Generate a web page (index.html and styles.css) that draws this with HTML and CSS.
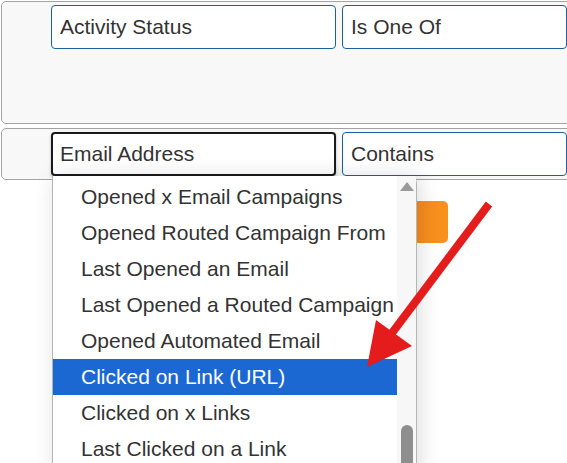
FILE: index.html
```html
<!DOCTYPE html>
<html>
<head>
<meta charset="utf-8">
<link rel="stylesheet" href="styles.css">
</head>
<body>
<div class="page">
  <div class="panel panel-tall">
    <div class="row">
      <div class="field field-a">Activity Status</div>
      <div class="field field-b">Is One Of</div>
    </div>
  </div>
  <div class="panel panel-short">
    <div class="row">
      <div class="field field-a focused">Email Address</div>
      <div class="field field-b">Contains</div>
    </div>
  </div>
  <div class="actions">
    <div class="btn-orange"></div>
  </div>

  <div class="dropdown">
    <ul class="options">
      <li>Opened x Email Campaigns</li>
      <li>Opened Routed Campaign From</li>
      <li>Last Opened an Email</li>
      <li>Last Opened a Routed Campaign</li>
      <li>Opened Automated Email</li>
      <li class="selected">Clicked on Link (URL)</li>
      <li>Clicked on x Links</li>
      <li>Last Clicked on a Link</li>
    </ul>
    <div class="scrollbar">
      <div class="scroll-up"></div>
      <div class="scroll-thumb"></div>
    </div>
  </div>

  <svg class="arrow" width="567" height="463" viewBox="0 0 567 463">
    <line x1="489" y1="204" x2="392" y2="333" stroke="#e41c1c" stroke-width="8"/>
    <polygon points="367,367 376,320 412,346" fill="#e41c1c"/>
  </svg>
</div>
</body>
</html>
```
FILE: styles.css
```css
html, body {
  margin: 0;
  padding: 0;
  background: #fff;
  overflow: hidden;
}
body {
  width: 567px;
  height: 463px;
  font-family: "Liberation Sans", Arial, sans-serif;
  color: #333;
}
.page {
  position: relative;
  height: 463px;
  padding: 1px 0 0 1px;
  box-sizing: border-box;
}
.panel {
  background: #f8f8f8;
  border: 1px solid #a3a3a3;
  border-radius: 5px;
  margin-right: -12px;
  box-sizing: border-box;
  padding: 3px 0 0 49px;
}
.panel-tall {
  height: 123px;
}
.panel-short {
  height: 52px;
  margin-top: 4px;
}
.row {
  display: flex;
  gap: 6px;
}
.field {
  height: 44px;
  box-sizing: border-box;
  border: 1px solid #1c5f9f;
  border-radius: 4px;
  background: #fff;
  font-size: 21px;
  line-height: 41px;
  padding-left: 8px;
  white-space: nowrap;
}
.field-a {
  width: 285px;
}
.field-b {
  width: 225px;
}
.field.focused {
  border: 2px solid #1a1a1a;
  line-height: 39px;
  padding-left: 7px;
  box-shadow: 0 1px 3px rgba(0,0,0,0.25);
}
.actions {
  display: flex;
  margin-top: 21px;
  padding-left: 340px;
}
.btn-orange {
  width: 107px;
  height: 42px;
  border-radius: 5px;
  background: linear-gradient(to right, #ee861f, #f9911d);
}
.dropdown {
  position: absolute;
  left: 52px;
  top: 176px;
  width: 365px;
  height: 300px;
  box-sizing: border-box;
  background: #fff;
  border: 1px solid #b5b5b5;
  border-top: none;
  border-radius: 0 7px 0 0;
  box-shadow: 3px 0 20px rgba(0,0,0,0.14);
  display: flex;
}
.options {
  list-style: none;
  margin: 0;
  padding: 3px 0 0 0;
  flex: 1;
  font-size: 21px;
}
.options li {
  height: 36px;
  line-height: 36px;
  padding-left: 28px;
  white-space: nowrap;
}
.options li.selected {
  background: #1b68d3;
  color: #fff;
}
.scrollbar {
  position: relative;
  width: 19px;
  background: #f7f7f7;
}
.scroll-up {
  position: absolute;
  left: 3px;
  top: 6px;
  width: 0;
  height: 0;
  border-left: 7px solid transparent;
  border-right: 7px solid transparent;
  border-bottom: 9px solid #9a9a9a;
}
.scroll-thumb {
  position: absolute;
  left: 4px;
  top: 249px;
  width: 12px;
  height: 60px;
  border-radius: 6px 6px 0 0;
  background: #8e8e8e;
}
.arrow {
  position: absolute;
  left: 0;
  top: 0;
}
```
